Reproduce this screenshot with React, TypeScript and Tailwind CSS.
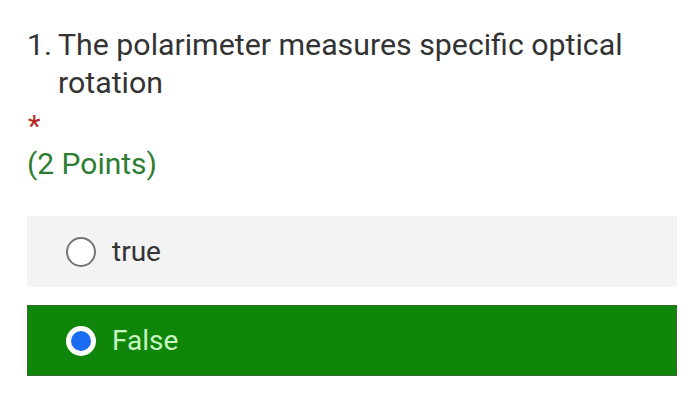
export default function App() {
  return (
    <div className="h-[404px] w-[700px] bg-white pl-[27px] pr-[20px] pt-[26px] font-['Roboto',sans-serif]">
      <div className="flex text-[30.3px] leading-[38px] text-[#333333]">
        <span className="w-[31px] shrink-0">1.</span>
        <span>The polarimeter measures specific optical rotation</span>
      </div>
      <div className="mt-[8px] h-[24px] pl-[1px] text-[29px] leading-[32px] text-[#b3261e]">*</div>
      <div className="mt-[12px] text-[30px] leading-[36px] text-[#2e7d32]">(2 Points)</div>
      <div className="mt-[34px] flex flex-col gap-[18px] pr-[3px]">
        <div className="flex h-[71px] items-center bg-[#f3f3f3] pl-[39px]">
          <span className="h-[30px] w-[30px] rounded-full border-2 border-[#757575] bg-white" />
          <span className="ml-[16px] text-[28px] leading-none text-[#333333]">true</span>
        </div>
        <div className="flex h-[71px] items-center border border-[#2e6b2a] bg-[#0f860a] pl-[38px]">
          <span className="flex h-[30px] w-[30px] items-center justify-center rounded-full bg-white">
            <span className="h-[20px] w-[20px] rounded-full bg-[#1a6cf0]" />
          </span>
          <span className="ml-[16px] text-[28px] leading-none text-[#c9f5c0]">False</span>
        </div>
      </div>
    </div>
  );
}
